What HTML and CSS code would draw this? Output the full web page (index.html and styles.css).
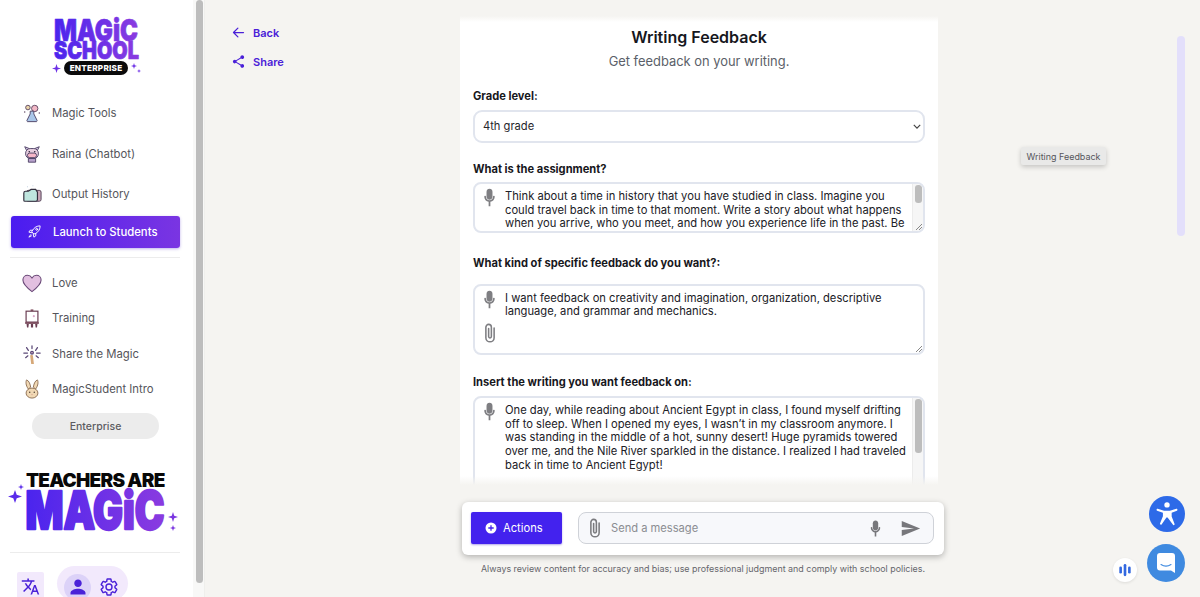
FILE: index.html
```html
<!DOCTYPE html>
<html lang="en">
<head>
<meta charset="utf-8">
<title>Writing Feedback</title>
<link rel="stylesheet" href="styles.css">
</head>
<body>
<svg class="defs" width="0" height="0" aria-hidden="true">
  <defs>
    <linearGradient id="brand" x1="0" y1="0" x2="1" y2="0"><stop offset="0" stop-color="#4a24ee"/><stop offset="1" stop-color="#8a3be0"/></linearGradient>
  </defs>
  <symbol id="mic" viewBox="0 0 24 24"><path d="M12 14.500c1.900 0 3.400-1.500 3.400-3.400V5.400C15.400 3.500 13.900 2 12 2S8.600 3.500 8.600 5.400v5.700c0 1.900 1.500 3.400 3.400 3.400z"/><path d="M18 11a1 1 0 0 0-2 0c0 2.200-1.800 4.200-4 4.200S8 13.200 8 11a1 1 0 0 0-2 0c0 3 2.300 5.500 5 5.900V22h2v-5.100c2.700-.4 5-2.900 5-5.900z"/></symbol>
  <symbol id="clip" viewBox="0 0 24 24"><path fill="none" stroke="currentColor" stroke-width="1.700" stroke-linecap="round" d="M16.500 6.500v10.600a4.500 4.500 0 0 1-9 0V5.600a3 3 0 0 1 6 0v10.300a1.500 1.500 0 0 1-3 0V7"/></symbol>
</svg>
<div class="app">
  <aside class="sidebar">
    <div class="logo">
      <svg class="logo-word" viewBox="0 0 90 43" width="90" height="43">
        <text class="brand-text" x="2" y="23.500" font-size="30" textLength="84" lengthAdjust="spacingAndGlyphs">MAGiC</text>
        <text class="brand-text" x="2" y="41.500" font-size="25" textLength="85" lengthAdjust="spacingAndGlyphs">SCHOOL</text>
      </svg>
      <div class="logo-tag">
        <svg class="spark" viewBox="0 0 10 10" width="9" height="9"><path d="M5 0l1.200 3.800L10 5 6.200 6.200 5 10 3.800 6.200 0 5l3.800-1.200z"/></svg>
        <span class="logo-pill">ENTERPRISE</span>
        <svg class="spark" viewBox="0 0 10 10" width="10" height="10"><path d="M3 0l.7 2.300L6 3l-2.300.7L3 6l-.7-2.300L0 3l2.300-.7zM8 6l.5 1.500L10 8l-1.500.5L8 10l-.5-1.500L6 8l1.500-.5z"/></svg>
      </div>
    </div>

    <nav class="nav nav-main">
      <a class="nav-item">
        <svg class="nav-icon" viewBox="0 0 22 22"><circle cx="14" cy="6" r="3.500" fill="#f2b8c6" stroke="#5b4560"/><circle cx="6.500" cy="5" r="2.500" fill="#e8d2a8" stroke="#5b4560"/><path d="M9 9h4v3l3.500 7a1 1 0 0 1-1 1.500h-9a1 1 0 0 1-1-1.500L9 12z" fill="#a9c6e8" stroke="#4b3f62"/><circle cx="3" cy="10" r=".8" fill="#5b4560"/><circle cx="19" cy="11" r=".8" fill="#5b4560"/></svg>
        <span>Magic Tools</span>
      </a>
      <a class="nav-item">
        <svg class="nav-icon" viewBox="0 0 22 22"><path d="M5 7L3 3l5 2M17 7l2-4-5 2" fill="#d8c8e8" stroke="#4b3f62"/><rect x="4" y="5" width="14" height="11" rx="5" fill="#e8cfe0" stroke="#4b3f62"/><rect x="6" y="10" width="10" height="5" rx="2.500" fill="#f6b6c8" stroke="#4b3f62"/><circle cx="8" cy="8.500" r=".9" fill="#2c2238"/><circle cx="14" cy="8.500" r=".9" fill="#2c2238"/><path d="M7 16h8v4H7z" fill="#b8a2cc" stroke="#4b3f62"/></svg>
        <span>Raina (Chatbot)</span>
      </a>
      <a class="nav-item">
        <svg class="nav-icon" viewBox="0 0 22 22"><rect x="5" y="7" width="16" height="12" rx="2" fill="#c9a7b7" stroke="#4b3a52"/><path d="M2 10c0-1 1-2 2-2h3l3-2h5l2 3v8a2 2 0 0 1-2 2H3a1 1 0 0 1-1-1z" fill="#bfe6df" stroke="#34303f" stroke-width="1.300"/><circle cx="6" cy="3" r=".6" fill="#bcd"/><circle cx="12" cy="2" r=".6" fill="#bcd"/></svg>
        <span>Output History</span>
      </a>
    </nav>

    <a class="launch">
      <svg class="launch-icon" viewBox="0 0 24 24" fill="none" stroke="#fff" stroke-width="1.500" stroke-linejoin="round" stroke-linecap="round"><path d="M9 10c3-5 7-7 12-7 0 5-2 9-7 12l-3 1-3-3z"/><path d="M9 10H5l-2 3 5 1M14 15v4l-3 2-1-5"/><circle cx="15.500" cy="8.500" r="1.500"/><path d="M6 17l-3 4 4-2"/></svg>
      <span>Launch to Students</span>
    </a>

    <hr class="rule rule-first">

    <nav class="nav nav-second">
      <a class="nav-item">
        <svg class="nav-icon" viewBox="0 0 22 22"><path d="M11 20.500C5 16 1 12.500 1 7.800 1 4.600 3.400 2.500 6 2.500c2 0 3.800 1 5 3 1.200-2 3-3 5-3 2.600 0 5 2.100 5 5.300 0 4.700-4 8.200-10 12.700z" fill="#e2bfe0" stroke="#6a4a78" stroke-width="1.200"/></svg>
        <span>Love</span>
      </a>
      <a class="nav-item">
        <svg class="nav-icon" viewBox="0 0 22 22"><path d="M9.500 1.500h3V4h-3z" fill="#8a5a6a"/><rect x="4.500" y="3.500" width="13" height="12" fill="#fff" stroke="#6a3d52" stroke-width="1.300"/><path d="M3.500 15.500h15v2h-15z" fill="#7a4a5c"/><path d="M5 17.500h2.500l-.5 4H5.500zM9.800 17.500h2.400v4H9.800zM14.500 17.500H17l-.5 4H15z" fill="#6a3d52"/><circle cx="13" cy="9" r="1.200" fill="#d9a8c8"/></svg>
        <span>Training</span>
      </a>
      <a class="nav-item">
        <svg class="nav-icon" viewBox="0 0 22 22" fill="none" stroke="#5c4a78" stroke-width="1.400" stroke-linecap="round"><path d="M10 13l1 8h1l-1-8" stroke="#d6a878" stroke-width="2"/><path d="M11 2v3M5 4l2 3M17 4l-2 3M2 10h4M16 10h4M4 15l2.500-2M18 15l-2.500-2"/><circle cx="11" cy="9.500" r="1.500" fill="#e8b8d0"/></svg>
        <span>Share the Magic</span>
      </a>
      <a class="nav-item">
        <svg class="nav-icon" viewBox="0 0 22 22"><path d="M7 11C4 7 4 3 5 1c3 1 4 5 4.500 8zM15 11c3-4 3-8 2-10-3 1-4 5-4.500 8z" fill="#f0d8b4" stroke="#8a6a50"/><ellipse cx="11" cy="15.500" rx="6.500" ry="5.500" fill="#f0d8b4" stroke="#8a6a50"/><circle cx="8.500" cy="14.500" r=".8" fill="#4a3a30"/><circle cx="13.500" cy="14.500" r=".8" fill="#4a3a30"/><path d="M10 17h2l-1 1z" fill="#c07a70"/></svg>
        <span>MagicStudent Intro</span>
      </a>
    </nav>

    <div class="plan">Enterprise</div>

    <div class="promo">
      <div class="promo-top">TEACHERS ARE</div>
      <div class="promo-row">
        <svg class="promo-spark-left" viewBox="0 0 16 22" width="16" height="22"><path d="M7 6l1.700 4.800L14 12.500l-5.300 1.700L7 19l-1.700-4.800L0 12.500l5.300-1.700z" fill="#5a2bea"/><path d="M13 0l.7 2.300L16 3l-2.300.7L13 6l-.7-2.300L10 3l2.300-.7z" fill="#5a2bea"/></svg>
        <svg class="promo-word" viewBox="0 0 142 42" width="142" height="42">
          <text class="brand-text brand-big" x="1.500" y="40" font-size="52" textLength="139" lengthAdjust="spacingAndGlyphs">MAGiC</text>
        </svg>
        <svg class="promo-spark-right" viewBox="0 0 10 22" width="10" height="22"><path d="M5 2l1.200 3.800L10 7 6.200 8.200 5 12 3.800 8.200 0 7l3.800-1.200z" fill="#7a35e0"/><path d="M5 15l.8 2.200L8 18l-2.200.8L5 21l-.8-2.200L2 18l2.200-.8z" fill="#7a35e0"/></svg>
      </div>
    </div>

    <hr class="rule rule-last">

    <div class="account">
      <span class="lang">
        <svg viewBox="0 0 24 24" width="19" height="19"><path d="M12.870 15.070l-2.540-2.510.03-.03c1.740-1.940 2.980-4.170 3.710-6.530H17V4h-7V2H8v2H1v1.990h11.170C11.500 7.920 10.440 9.750 9 11.350 8.070 10.320 7.300 9.190 6.690 8h-2c.73 1.630 1.730 3.170 2.980 4.560l-5.090 5.020L4 19l5-5 3.110 3.110.76-2.040zM18.500 10h-2L12 22h2l1.120-3h4.750L21 22h2l-4.500-12zm-2.620 7l1.620-4.330L19.120 17h-3.240z"/></svg>
      </span>
      <span class="account-pill">
        <span class="avatar">
          <svg viewBox="0 0 24 24" width="20" height="20"><path d="M12 12c2.500 0 4.500-2 4.500-4.500S14.500 3 12 3 7.500 5 7.500 7.500 9.500 12 12 12zm0 2c-3.300 0-9 1.700-9 5v2h18v-2c0-3.300-5.700-5-9-5z"/></svg>
        </span>
        <svg class="gear" viewBox="0 0 24 24" width="20" height="20"><path d="M19.140 12.940c.04-.3.060-.61.060-.94 0-.32-.02-.64-.07-.94l2.030-1.580c.18-.14.230-.41.120-.61l-1.920-3.320c-.12-.22-.37-.29-.59-.22l-2.390.96c-.5-.38-1.030-.7-1.620-.94l-.36-2.540c-.04-.24-.24-.41-.48-.41h-3.840c-.24 0-.43.170-.47.410l-.36 2.540c-.59.240-1.130.570-1.620.940l-2.390-.96c-.22-.08-.47 0-.59.220L2.740 8.870c-.12.210-.08.470.120.610l2.030 1.580c-.05.300-.09.630-.09.940s.02.640.07.940l-2.030 1.580c-.18.140-.23.410-.12.610l1.920 3.320c.12.220.37.290.59.220l2.390-.96c.5.380 1.030.7 1.620.94l.36 2.540c.05.240.24.410.48.410h3.840c.24 0 .44-.17.47-.41l.36-2.540c.59-.24 1.130-.56 1.620-.94l2.390.96c.22.080.47 0 .59-.22l1.920-3.320c.12-.22.070-.47-.12-.61l-2.010-1.580zM12 15.600c-1.980 0-3.600-1.620-3.600-3.600s1.620-3.600 3.600-3.600 3.600 1.620 3.600 3.600-1.620 3.600-3.600 3.600z"/></svg>
      </span>
    </div>
  </aside>

  <div class="rail"><div class="rail-thumb"></div></div>

  <main class="main">
    <div class="links">
      <a class="link">
        <svg viewBox="0 0 24 24" width="15" height="15" fill="none" stroke="currentColor" stroke-width="2" stroke-linecap="round" stroke-linejoin="round"><path d="M20 12H4M11 5l-7 7 7 7"/></svg>
        <span>Back</span>
      </a>
      <a class="link">
        <svg viewBox="0 0 24 24" width="15" height="15" fill="currentColor"><path d="M18 16.080c-.76 0-1.440.3-1.960.77L8.910 12.700c.05-.23.090-.46.090-.7s-.04-.47-.09-.7l7.050-4.110c.54.5 1.250.81 2.040.81 1.660 0 3-1.340 3-3s-1.340-3-3-3-3 1.340-3 3c0 .24.040.47.090.7L8.040 9.810C7.500 9.310 6.790 9 6 9c-1.660 0-3 1.340-3 3s1.340 3 3 3c.79 0 1.500-.31 2.040-.81l7.120 4.160c-.05.21-.08.43-.08.65 0 1.610 1.310 2.920 2.920 2.920s2.920-1.310 2.920-2.920-1.310-2.920-2.920-2.920z"/></svg>
        <span>Share</span>
      </a>
    </div>

    <div class="center">
      <section class="form">
        <h1 class="title">Writing Feedback</h1>
        <p class="subtitle">Get feedback on your writing.</p>

        <label class="label label-grade">Grade level:</label>
        <div class="select">
          <span>4th grade</span>
          <svg viewBox="0 0 10 6" width="8" height="5" fill="none" stroke="#444" stroke-width="1.500"><path d="M1 1l4 4 4-4"/></svg>
        </div>

        <label class="label label-assign">What is the assignment?</label>
        <div class="area area-assign">
          <div class="area-tools"><svg class="mic"><use href="#mic"/></svg></div>
          <div class="area-text">Think about a time in history that you have studied in class. Imagine you could travel back in time to that moment. Write a story about what happens when you arrive, who you meet, and how you experience life in the past. Be</div>
          <div class="bar"><div class="bar-thumb"></div></div>
          <svg class="grip" viewBox="0 0 8 8" width="8" height="8" fill="none" stroke="#888"><path d="M1 7l6-6M4 7l3-3"/></svg>
        </div>

        <label class="label label-kind">What kind of specific feedback do you want?:</label>
        <div class="area area-kind">
          <div class="area-tools">
            <svg class="mic"><use href="#mic"/></svg>
            <svg class="clip"><use href="#clip"/></svg>
          </div>
          <div class="area-text">I want feedback on creativity and imagination, organization, descriptive language, and grammar and mechanics.</div>
          <svg class="grip" viewBox="0 0 8 8" width="8" height="8" fill="none" stroke="#888"><path d="M1 7l6-6M4 7l3-3"/></svg>
        </div>

        <label class="label label-insert">Insert the writing you want feedback on:</label>
        <div class="area area-insert">
          <div class="area-tools"><svg class="mic"><use href="#mic"/></svg></div>
          <div class="area-text">One day, while reading about Ancient Egypt in class, I found myself drifting off to sleep. When I opened my eyes, I wasn’t in my classroom anymore. I was standing in the middle of a hot, sunny desert! Huge pyramids towered over me, and the Nile River sparkled in the distance. I realized I had traveled back in time to Ancient Egypt!</div>
          <div class="bar"><div class="bar-thumb"></div></div>
        </div>
      </section>

      <div class="composer">
        <button class="actions">
          <svg viewBox="0 0 12 12" width="12" height="12"><circle cx="6" cy="6" r="5.500" fill="#fff"/><path d="M6 3.300v5.400M3.300 6h5.400" stroke="#4322ee" stroke-width="1.300"/></svg>
          <span>Actions</span>
        </button>
        <div class="message">
          <svg class="message-clip"><use href="#clip"/></svg>
          <span class="placeholder">Send a message</span>
          <svg class="message-mic"><use href="#mic"/></svg>
          <svg class="send" viewBox="0 0 24 24" width="21" height="21"><path d="M2 20.500L23 12 2 3.500v6.700l14 1.800-14 1.800z"/></svg>
        </div>
      </div>
      <p class="disclaimer">Always review content for accuracy and bias; use professional judgment and comply with school policies.</p>
    </div>

    <div class="tooltip">Writing Feedback</div>
    <div class="page-thumb"></div>

    <button class="fab fab-access" aria-label="Accessibility">
      <svg viewBox="0 0 24 24" width="28" height="28" fill="#fff"><circle cx="12" cy="4.200" r="2.300"/><path d="M4 7.600l5.500 1.600h5L20 7.600c.9-.2 1.400 1.200.5 1.600l-4.500 1.700v3.300l2.500 6.300c.3.900-1 1.500-1.500.6L12.500 15h-1L7.500 20.800c-.5.900-1.800.3-1.500-.6l2.500-6.300v-3L3.500 9.200c-.9-.4-.4-1.800.5-1.600z"/></svg>
    </button>
    <button class="fab fab-chat" aria-label="Chat">
      <svg viewBox="0 0 24 24" width="24" height="24"><path d="M6 2h12a3 3 0 0 1 3 3v17l-4-2.500H6a3 3 0 0 1-3-3V5a3 3 0 0 1 3-3z" fill="#fff"/><path d="M7 13.500c3 2 7 2 10 0" fill="none" stroke="#3f8ae0" stroke-width="1.100" stroke-linecap="round"/></svg>
    </button>
    <button class="fab fab-voice" aria-label="Voice">
      <svg viewBox="0 0 16 16" width="14" height="14" fill="#3268e0"><rect x="1.500" y="4" width="3" height="8" rx="1.500"/><rect x="6.500" y="1" width="3" height="14" rx="1.500"/><rect x="11.500" y="4" width="3" height="8" rx="1.500"/></svg>
    </button>
  </main>
</div>
</body>
</html>
```
FILE: styles.css
```css
* { box-sizing: border-box; }
html, body { margin: 0; height: 100%; overflow: hidden; }
body { font-family: Inter, "Liberation Sans", sans-serif; color: #1c1c22; background: #f5f4f1; }
.defs { position: absolute; }
.app { display: flex; height: 597px; }

/* sidebar */
.sidebar { width: 193px; flex: none; background: #fff; padding: 17px 12px 0 10px; overflow: hidden; }
.logo { display: flex; flex-direction: column; align-items: center; height: 76px; margin-left: 2px; }
.logo-word { display: block; flex: none; overflow: visible; }
.brand-text { font-family: Inter, "Liberation Sans", sans-serif; font-weight: 900; fill: url(#brand); stroke: url(#brand); stroke-width: .7; stroke-linejoin: round; }
.brand-big { stroke-width: 2.400; }
.logo-tag { display: flex; align-items: center; gap: 3px; margin-top: 1px; }
.logo-tag .spark { fill: #6c2fe6; flex: none; }
.logo-pill { background: #0b0b0b; color: #fff; font-size: 8.200px; font-weight: 800; height: 14px; line-height: 14px; padding: 0 6px; border-radius: 7px; letter-spacing: .2px; white-space: nowrap; }

.nav-item { display: flex; align-items: center; gap: 10px; padding-left: 12px; color: #55555b; font-size: 11.300px; }
.nav-main .nav-item { height: 40.500px; }
.nav-second .nav-item { height: 35.500px; }
.nav-icon { width: 20px; height: 20px; flex: none; }

.launch {
  display: flex; align-items: center; gap: 11px; height: 32px; width: 169px; margin: 1px 0 0 1px;
  padding-left: 16px; border-radius: 3px; color: #fff; font-size: 11.300px; font-weight: 500;
  background: linear-gradient(90deg, #4a1cf0, #7a35e2);
  box-shadow: 0 1px 3px rgba(70, 30, 200, .35);
}
.launch-icon { width: 15px; height: 15px; }
.rule { border: 0; border-top: 1px solid #ececec; margin: 0; width: 170px; }
.rule-first { margin: 9px 0 7.500px 0; }
.plan { width: 127px; height: 26px; margin: 6px 0 0 22px; border-radius: 13px; background: #ececec; color: #5c5c62; font-size: 10.500px; font-weight: 500; display: flex; align-items: center; justify-content: center; }

.promo { margin-top: 33px; height: 61px; display: flex; flex-direction: column; }
.promo-top { font-size: 19px; line-height: 17px; height: 17px; font-weight: 900; color: #080808; letter-spacing: -.75px; padding-left: 16px; white-space: nowrap; }
.promo-row { display: flex; align-items: flex-start; }
.promo-spark-left { flex: none; margin: -5px 0 0 -2px; }
.promo-word { flex: none; display: block; overflow: visible; }
.promo-spark-right { flex: none; margin: 21px 0 0 2px; }
.rule-last { margin-top: 19px; }
.account { display: flex; align-items: flex-start; margin-top: 13px; padding-left: 7px; gap: 13px; }
.lang { width: 27px; height: 28px; margin-top: 6px; background: #f2e9fc; display: flex; align-items: center; justify-content: center; border-radius: 2px; fill: #4a22d8; }
.account-pill { display: flex; align-items: center; width: 71px; height: 35px; padding: 0 7px; gap: 8px; border-radius: 18px; background: #f2e9fc; fill: #4a22d8; }
.avatar { width: 27px; height: 27px; border-radius: 50%; background: #dcd2f8; display: flex; align-items: center; justify-content: center; flex: none; margin-top: 7px; }
.gear { fill: none; stroke: #4a22d8; stroke-width: 1.700; flex: none; margin-top: 7px; }

.rail { width: 12px; flex: none; background: #f8f8f7; padding: 0 2px 0 3px; border-right: 1px solid #efefec; }
.rail-thumb { width: 7px; height: 583px; border-radius: 4px; background: #bdbdbd; }

/* main */
.main { flex: 1; display: flex; min-width: 0; }
.links { width: 255px; flex: none; padding: 25px 0 0 26px; display: flex; flex-direction: column; gap: 14px; }
.link { display: flex; align-items: center; gap: 7px; height: 15px; color: #4a20d8; font-size: 11px; font-weight: 600; }
.center { width: 478px; flex: none; display: flex; flex-direction: column; }

.form { position: relative; height: 469px; margin-top: 16px; background: #fff; padding: 0 13px; overflow: hidden; flex: none; }
.form::before { content: ""; position: absolute; left: 0; right: 0; top: 0; height: 6px; background: linear-gradient(#f5f4f1, rgba(245, 244, 241, 0)); }
.form::after { content: ""; position: absolute; left: 0; right: 0; bottom: 0; height: 9px; background: linear-gradient(rgba(245, 244, 241, 0), #f5f4f1); }
.title { margin: 11px 0 0; font-size: 16px; line-height: 20px; font-weight: 600; text-align: center; color: #16171d; }
.subtitle { margin: 6px 0 0; font-size: 12.900px; line-height: 17px; text-align: center; color: #5b5f69; }
.label { display: block; font-size: 11.120px; line-height: 15px; font-weight: 700; color: #17171c; }
.label-grade { margin-top: 19px; }
.label-assign { margin-top: 19.500px; }
.label-kind { margin-top: 23px; }
.label-insert { margin-top: 20px; }
.select { display: flex; align-items: center; justify-content: space-between; height: 32.500px; margin-top: 6px; padding: 0 2px 0 8px; border: 2px solid #e1e5ee; border-radius: 9px; background: #fff; font-size: 11.150px; color: #26262c; }
.area { position: relative; display: flex; border: 2px solid #e1e5ee; border-radius: 8px; background: #fff; overflow: hidden; }
.area-assign { height: 51px; margin-top: 5px; }
.area-kind { height: 71px; margin-top: 13px; }
.area-insert { height: 120px; margin-top: 6px; }
.area-tools { width: 30px; flex: none; display: flex; flex-direction: column; align-items: center; padding: 3px 1px 0 0; gap: 12px; }
.mic { width: 21px; height: 21px; fill: #7e7e82; flex: none; }
.clip { width: 22px; height: 22px; color: #7e7e82; flex: none; }
.area-text { flex: 1; padding: 6px 5px 0 0; font-size: 11.200px; line-height: 13.700px; color: #202026; min-width: 0; }
.area-kind .area-text { padding-top: 5.500px; }
.bar { width: 11px; flex: none; background: #f6f6f6; border-left: 1px solid #ececec; padding: 1px 1px 0 2px; }
.bar-thumb { width: 7px; height: 18px; border-radius: 3px; background: #bdbdbd; }
.area-insert .bar-thumb { height: 54px; }
.grip { position: absolute; right: 0; bottom: 0; }

.composer { display: flex; align-items: flex-start; gap: 16px; width: 482px; height: 53px; margin: 17px 0 0 2px; padding: 10px 10px 0 9px; background: #fff; border-radius: 6px; box-shadow: 0 2px 6px rgba(0, 0, 0, .28); flex: none; }
.actions { display: flex; align-items: center; gap: 6px; width: 91px; height: 32px; flex: none; padding: 0 0 0 14px; border: 0; border-radius: 2px; background: #4322ee; color: #fff; font: 400 11.200px Inter, "Liberation Sans", sans-serif; box-shadow: 0 1px 2px rgba(60, 30, 200, .4); }
.message { flex: 1; display: flex; align-items: center; height: 32px; padding: 0 12px 0 5px; border: 1px solid #cfd2d8; border-radius: 8px; background: #f7f8fb; color: #7f7f84; }
.message-clip { width: 22px; height: 22px; color: #7a7a7e; flex: none; }
.placeholder { flex: 1; margin-left: 5px; font-size: 11.150px; color: #8b8d92; }
.message-mic { width: 19px; height: 19px; fill: #77777b; margin-right: 15px; flex: none; }
.send { fill: #77777b; flex: none; }
.disclaimer { width: 482px; margin: 8px 0 0 2px; text-align: center; font-size: 8.920px; line-height: 12px; color: #66666c; white-space: nowrap; }

/* floating pieces */
.tooltip { position: absolute; left: 1021px; top: 147px; width: 85px; height: 18px; display: flex; align-items: center; justify-content: center; background: #e9e9e8; border-radius: 2px; font-size: 8.950px; color: #55555b; box-shadow: 0 2px 5px rgba(0, 0, 0, .2); }
.page-thumb { position: absolute; left: 1177px; top: 36px; width: 8px; height: 200px; border-radius: 4px; background: #e3dffb; }
.fab { position: absolute; display: flex; align-items: center; justify-content: center; padding: 0; border: 0; border-radius: 50%; }
.fab-access { left: 1149px; top: 496px; width: 36px; height: 36px; background: #2d6ae8; }
.fab-chat { left: 1147px; top: 544px; width: 38px; height: 38px; background: #3f8ae0; }
.fab-voice { left: 1113px; top: 558px; width: 24px; height: 24px; background: #fff; box-shadow: 0 1px 3px rgba(0, 0, 0, .1); }
```
